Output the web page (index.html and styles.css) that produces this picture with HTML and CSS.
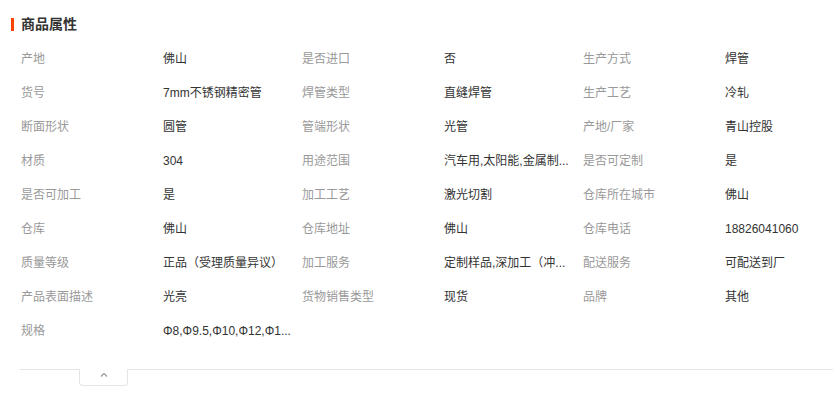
FILE: index.html
```
<!DOCTYPE html>
<html lang="zh-CN">

<head>
    <meta charset="UTF-8">
    <meta name="viewport" content="width=device-width, initial-scale=1.0">
    <title>商品属性</title>
    <link rel="stylesheet" href="styles.css">
</head>

<body>
    <div class="attr_box">
        <h2 class="attr_title">商品属性</h2>
        <ul class="attr_list">
            <li><span class="name">产地</span><span class="val">佛山</span></li>
            <li><span class="name">是否进口</span><span class="val">否</span></li>
            <li><span class="name">生产方式</span><span class="val">焊管</span></li>
            <li><span class="name">货号</span><span class="val">7mm不锈钢精密管</span></li>
            <li><span class="name">焊管类型</span><span class="val">直缝焊管</span></li>
            <li><span class="name">生产工艺</span><span class="val">冷轧</span></li>
            <li><span class="name">断面形状</span><span class="val">圆管</span></li>
            <li><span class="name">管端形状</span><span class="val">光管</span></li>
            <li><span class="name">产地/厂家</span><span class="val">青山控股</span></li>
            <li><span class="name">材质</span><span class="val">304</span></li>
            <li><span class="name">用途范围</span><span class="val" title="汽车用,太阳能,金属制品">汽车用,太阳能,金属制...</span></li>
            <li><span class="name">是否可定制</span><span class="val">是</span></li>
            <li><span class="name">是否可加工</span><span class="val">是</span></li>
            <li><span class="name">加工工艺</span><span class="val">激光切割</span></li>
            <li><span class="name">仓库所在城市</span><span class="val">佛山</span></li>
            <li><span class="name">仓库</span><span class="val">佛山</span></li>
            <li><span class="name">仓库地址</span><span class="val">佛山</span></li>
            <li><span class="name">仓库电话</span><span class="val">18826041060</span></li>
            <li><span class="name">质量等级</span><span class="val">正品（受理质量异议）</span></li>
            <li><span class="name">加工服务</span><span class="val" title="定制样品,深加工（冲压）">定制样品,深加工（冲...</span></li>
            <li><span class="name">配送服务</span><span class="val">可配送到厂</span></li>
            <li><span class="name">产品表面描述</span><span class="val">光亮</span></li>
            <li><span class="name">货物销售类型</span><span class="val">现货</span></li>
            <li><span class="name">品牌</span><span class="val">其他</span></li>
            <li><span class="name">规格</span><span class="val" title="Φ8,Φ9.5,Φ10,Φ12,Φ16">Φ8,Φ9.5,Φ10,Φ12,Φ1...</span></li>
        </ul>
        <div class="fold_bar">
            <a class="fold_btn" href="javascript:;">
                <svg width="8" height="5" viewBox="0 0 8 5">
                    <path d="M1 4.5 L4 1.5 L7 4.5" fill="none" stroke="#999" stroke-width="1.2" />
                </svg>
            </a>
        </div>
    </div>
</body>

</html>
```

FILE: styles.css
```
* {
    margin: 0;
    padding: 0;
    box-sizing: border-box;
}

body {
    font-family: "Liberation Sans", "Noto Sans CJK SC", sans-serif;
    font-size: 12px;
    color: #333;
    background: #fff;
}

.attr_box {
    padding-top: 18px;
}

.attr_title {
    margin-left: 11px;
    padding-left: 7px;
    border-left: 3px solid #ff4400;
    height: 13px;
    line-height: 13px;
    font-size: 14px;
    font-weight: bold;
    color: #333;
}

.attr_list {
    list-style: none;
    display: flex;
    flex-wrap: wrap;
    width: 864px;
    padding-left: 21px;
    margin-top: 11px;
}

.attr_list li {
    display: flex;
    width: 281px;
    height: 34px;
    line-height: 34px;
}

.attr_list .name {
    width: 142px;
    color: #999;
}

.attr_list .val {
    width: 125px;
    color: #333;
    white-space: nowrap;
}

.fold_bar {
    margin-top: 21px;
    margin-left: 20px;
    border-top: 1px solid #e5e5e5;
    height: 20px;
}

.fold_btn {
    display: flex;
    justify-content: center;
    align-items: flex-start;
    padding-top: 3px;
    margin-left: 59px;
    margin-top: -1px;
    width: 49px;
    height: 17px;
    background: #fff;
    border: 1px solid #e5e5e5;
    border-top: none;
    border-radius: 0 0 4px 4px;
}
```
